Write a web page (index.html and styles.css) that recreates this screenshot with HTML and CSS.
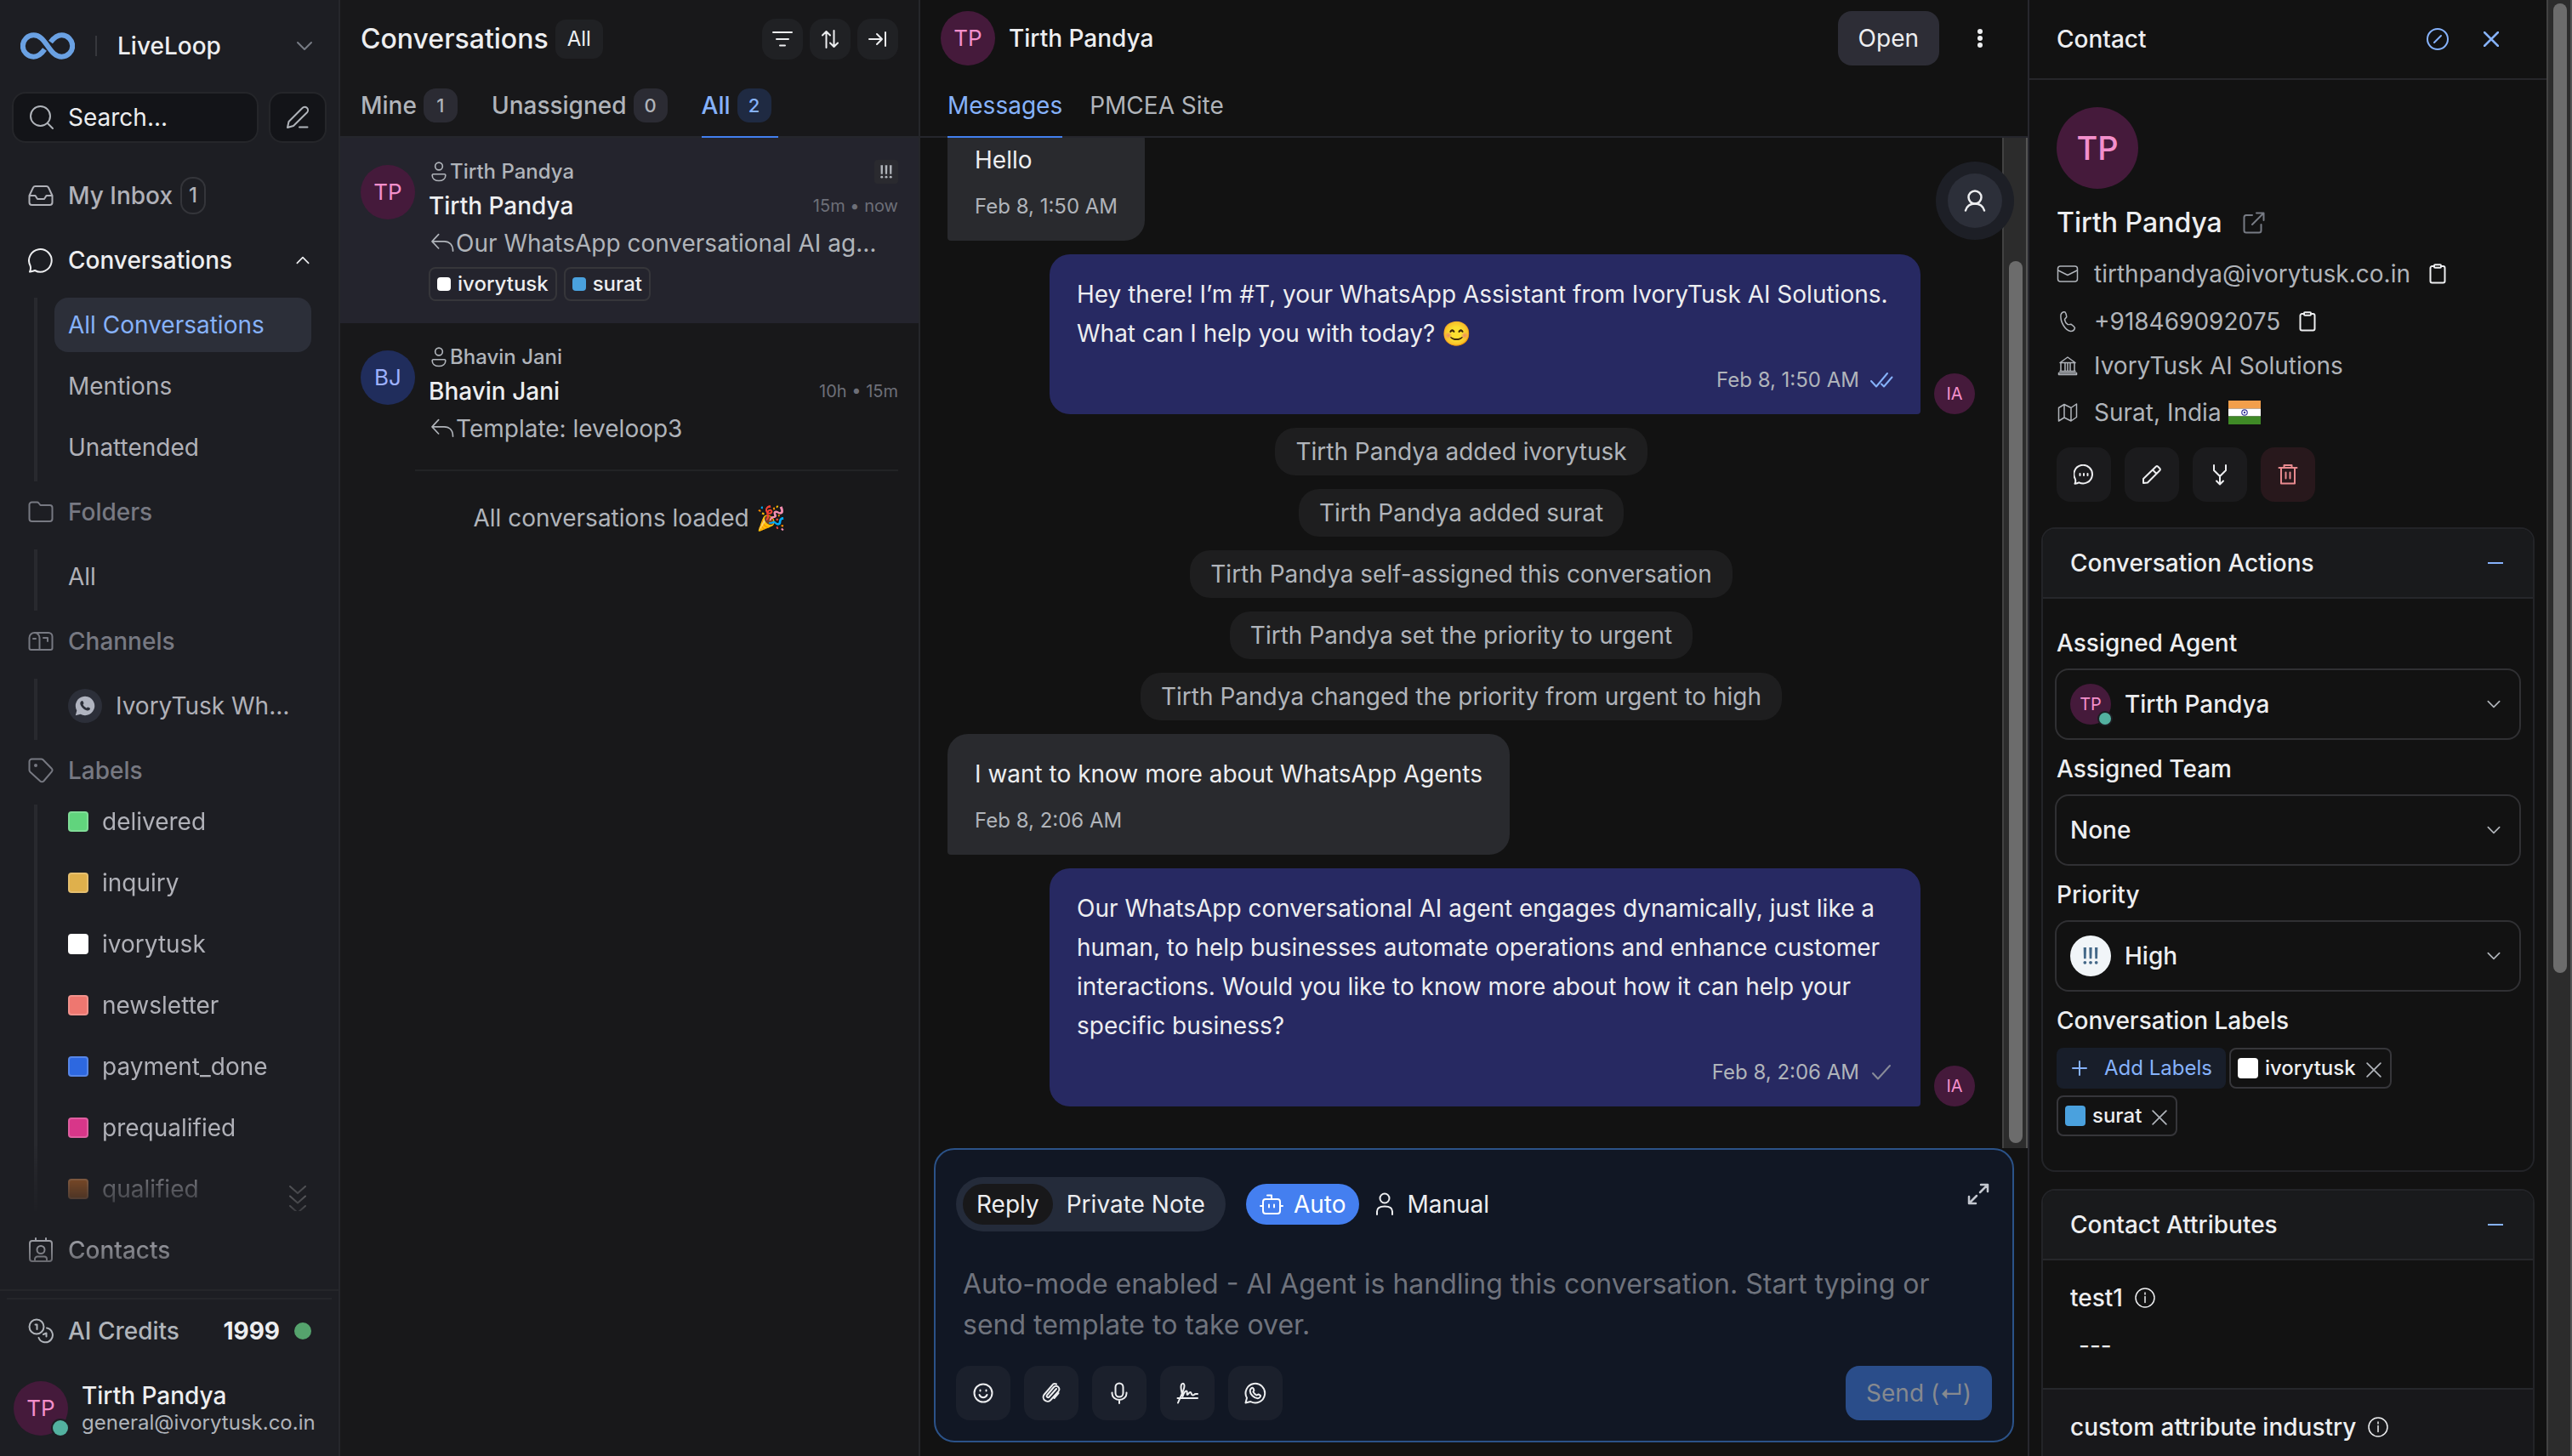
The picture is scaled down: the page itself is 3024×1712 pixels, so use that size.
FILE: index.html
```html
<!DOCTYPE html>
<html lang="en">
<head>
<meta charset="utf-8">
<title>Conversations - LiveLoop</title>
<link rel="stylesheet" href="styles.css">
</head>
<body>
<svg class="sprite" aria-hidden="true">
  <symbol id="chev-down" viewBox="0 0 24 24"><path d="M4 8l8 8 8-8"/></symbol>
  <symbol id="chev-up" viewBox="0 0 24 24"><path d="M4 16l8-8 8 8"/></symbol>
  <symbol id="person-dot" viewBox="0 0 16 24"><circle cx="8" cy="6" r="4"/><path d="M2 14.500h12a1.200 1.200 0 0 1 1.200 1.400c0 3.500-3 5.800-7.200 5.800s-7.200-2.300-7.200-5.800a1.200 1.200 0 0 1 1.200-1.400z"/></symbol>
  <symbol id="reply-arrow" viewBox="0 0 26 22"><path d="M9 1.500L2 9l7 7.500M2 9h13c6 0 9.500 4 9.500 10.500"/></symbol>
  <symbol id="clipboard" viewBox="0 0 20 24"><path d="M6 3H3.500A2 2 0 0 0 1.500 5v15.500a2 2 0 0 0 2 2h13a2 2 0 0 0 2-2V5a2 2 0 0 0-2-2H14"/><rect x="6" y="1.200" width="8" height="3.600" rx="1"/></symbol>
  <symbol id="info" viewBox="0 0 24 24"><circle cx="12" cy="12" r="11"/><path d="M12 10.500v7M12 6v2"/></symbol>
  <symbol id="close" viewBox="0 0 16 16"><path d="M1 1l14 14M15 1L1 15"/></symbol>
  <symbol id="bangs" viewBox="0 0 16 18"><path class="solid" d="M.5 0h3l-.3 12H.8zM6.500 0h3l-.3 12H6.800zM12.500 0h3l-.3 12h-2.400z"/><circle class="solid" cx="2" cy="16" r="1.700"/><circle class="solid" cx="8" cy="16" r="1.700"/><circle class="solid" cx="14" cy="16" r="1.700"/></symbol>
</svg>

<div class="app">
  <aside class="sidebar">
    <div class="brand">
      <svg class="logo" width="64" height="32" viewBox="0 0 64 32"><path d="M28.500 20C25 25 21.500 28.700 15.500 28.700a12.700 12.700 0 0 1 0-25.400C23 3.300 27 9 32 16s9 12.700 16.500 12.700a12.700 12.700 0 0 0 0-25.400c-6 0-9.500 3.700-13 8.200"/></svg>
      <span class="brand-rule"></span>
      <button class="brand-name">LiveLoop <svg class="icon dim" width="24" height="24"><use href="#chev-down"/></svg></button>
    </div>
    <div class="search-row">
      <label class="search">
        <svg class="icon" width="30" height="30" viewBox="0 0 30 30"><circle cx="13.500" cy="13.500" r="11.500"/><path d="M22 22l6 6"/></svg>
        <input type="text" placeholder="Search..." aria-label="Search">
      </label>
      <button class="compose" aria-label="New message"><svg class="icon" width="28" height="28" viewBox="0 0 28 28"><path d="M2 26l1.500-7L19.500 3a3.600 3.600 0 0 1 5.500 5.200L9 24zM16 25.500h9.500"/></svg></button>
    </div>

    <div class="nav-scroll">
    <nav class="nav">
      <a class="nav-head" href="#"><svg class="icon" width="30" height="26" viewBox="0 0 30 26"><path d="M1.500 13L6 3.500A3 3 0 0 1 8.500 2h13A3 3 0 0 1 24 3.500L28.500 13v8a3 3 0 0 1-3 3h-21a3 3 0 0 1-3-3zM1.500 13h7l2.500 4h8l2.500-4h7"/></svg>My Inbox <span class="count-ring">1</span></a>

      <button class="nav-head bright"><svg class="icon" width="30" height="30" viewBox="0 0 30 30"><path d="M2 28.500c1-2 1.500-4 .6-7A13.300 13.300 0 1 1 8 27c-2 1-4 1.200-6 1.500z"/></svg>Conversations <svg class="icon push" width="20" height="20"><use href="#chev-up"/></svg></button>
      <ul class="nav-list">
        <li><a class="current" href="#">All Conversations</a></li>
        <li><a href="#">Mentions</a></li>
        <li><a href="#">Unattended</a></li>
      </ul>

      <button class="nav-head faint"><svg class="icon" width="30" height="26" viewBox="0 0 30 26"><path d="M4.500 1.500h6c1 0 1.500.3 2 1l2 2.500h11a3 3 0 0 1 3 3v13a3 3 0 0 1-3 3h-21a3 3 0 0 1-3-3v-16.500a3 3 0 0 1 3-3z"/></svg>Folders</button>
      <ul class="nav-list"><li><a href="#">All</a></li></ul>

      <button class="nav-head faint"><svg class="icon" width="30" height="24" viewBox="0 0 30 24"><path d="M7.500 2H24a4.500 4.500 0 0 1 4.500 4.500V20a2 2 0 0 1-2 2h-23a2 2 0 0 1-2-2V8a6 6 0 0 1 12 0v14M10 2M6 9h3M18 8h5v4"/></svg>Channels</button>
      <ul class="nav-list"><li><a class="channel" href="#"><span class="channel-dot"><svg width="24" height="24" viewBox="0 0 24 24"><path class="blob" d="M.8 23.200L2.300 17.500A11.200 11.200 0 1 1 6.700 21.800z"/><path class="handset" d="M7.500 6.500c.8-.9 1.700-.7 2 .1l1 2.200c0 .6-.9 1.300-.9 1.800.8 1.700 2.200 3 4 3.800.6 0 1.200-1.200 1.800-1l2.300 1.200c.5.400.2 1.900-.8 2.500-1.400.9-3.600.5-6.600-1.600-2.700-2.200-4-4.700-4-6.400 0-1.100.6-2 1.200-2.600z"/></svg></span>IvoryTusk Wh…</a></li></ul>

      <button class="nav-head faint"><svg class="icon" width="30" height="30" viewBox="0 0 30 30"><path d="M1.500 4.500a3 3 0 0 1 3-3h11a3 3 0 0 1 2 .8l10.300 10.500a2.500 2.500 0 0 1 0 3.600L18.300 27.500a2.800 2.800 0 0 1-4 0L2.500 16.800a3 3 0 0 1-1-2.200z"/><circle class="solid" cx="9" cy="9" r="2"/></svg>Labels</button>
      <ul class="nav-list tags">
        <li><a href="#"><span class="swatch green"></span>delivered</a></li>
        <li><a href="#"><span class="swatch amber"></span>inquiry</a></li>
        <li><a href="#"><span class="swatch white"></span>ivorytusk</a></li>
        <li><a href="#"><span class="swatch coral"></span>newsletter</a></li>
        <li><a href="#"><span class="swatch blue"></span>payment_done</a></li>
        <li><a href="#"><span class="swatch pink"></span>prequalified</a></li>
        <li><a href="#"><span class="swatch brown"></span>qualified</a>
          <svg class="icon more" width="20" height="36" viewBox="0 0 20 36"><path opacity=".5" d="M1 2l9 8 9-8"/><path opacity=".75" d="M1 13.500l9 8 9-8"/><path d="M1 25l9 8 9-8"/></svg></li>
      </ul>

      <a class="nav-head contacts" href="#"><svg class="icon" width="30" height="30" viewBox="0 0 30 30"><rect x="2" y="4" width="26" height="24" rx="3"/><path d="M9 1v3M21 1v3M8 28v-2.500a3 3 0 0 1 3-3h8a3 3 0 0 1 3 3V28"/><circle cx="15" cy="14.500" r="4.500"/></svg>Contacts</a>
    </nav>
    </div>

    <div class="side-foot">
      <div class="credits">
        <svg class="icon" width="30" height="30" viewBox="0 0 30 30"><circle cx="10" cy="10" r="8.500"/><path d="M8.500 7.500h2V13M22 11.500A8.500 8.500 0 1 1 12.500 23M18 19l3.500-1.500v4"/></svg>
        <span>AI Credits</span><strong>1999</strong><i class="ok-dot"></i>
      </div>
      <button class="me">
        <span class="avatar plum">TP<i class="presence"></i></span>
        <span class="me-text"><b>Tirth Pandya</b><small>general@ivorytusk.co.in</small></span>
      </button>
    </div>
  </aside>

  <section class="list">
    <header class="list-head">
      <h1>Conversations</h1><span class="chip">All</span>
      <div class="tools">
        <button aria-label="Filter"><svg class="icon" width="24" height="24" viewBox="0 0 24 24"><path d="M1 4h22M5 12h14M9 19.500h6"/></svg></button>
        <button aria-label="Sort"><svg class="icon" width="24" height="24" viewBox="0 0 24 24"><path d="M7.500 22V3M3 7.500L7.500 3 12 7.500M16.500 2v19M12 16.500l4.500 4.500 4.500-4.500"/></svg></button>
        <button aria-label="Expand list"><svg class="icon" width="24" height="24" viewBox="0 0 24 24"><path d="M2 12h15M11 6l6 6-6 6M21 4v16"/></svg></button>
      </div>
    </header>
    <div class="tabs">
      <button class="tab">Mine <span class="badge">1</span></button>
      <button class="tab">Unassigned <span class="badge">0</span></button>
      <button class="tab on">All <span class="badge">2</span></button>
    </div>
    <article class="card active">
      <span class="avatar plum">TP</span>
      <div class="card-body">
        <div class="row inbox"><svg class="icon thin" width="20" height="26"><use href="#person-dot"/></svg>Tirth Pandya <span class="prio"><svg width="14" height="18"><use href="#bangs"/></svg></span></div>
        <div class="row who"><h2>Tirth Pandya</h2><time>15m • now</time></div>
        <p class="row preview"><svg class="icon thin" width="32" height="24"><use href="#reply-arrow"/></svg>Our WhatsApp conversational AI ag…</p>
        <div class="labels"><span class="label"><i class="sq white"></i>ivorytusk</span><span class="label"><i class="sq sky"></i>surat</span></div>
      </div>
    </article>
    <article class="card">
      <span class="avatar navy">BJ</span>
      <div class="card-body">
        <div class="row inbox"><svg class="icon thin" width="20" height="26"><use href="#person-dot"/></svg>Bhavin Jani</div>
        <div class="row who"><h2>Bhavin Jani</h2><time>10h • 15m</time></div>
        <p class="row preview"><svg class="icon thin" width="32" height="24"><use href="#reply-arrow"/></svg>Template: leveloop3</p>
      </div>
    </article>
    <p class="loaded">All conversations loaded 🎉</p>
  </section>

  <main class="chat">
    <header class="chat-head">
      <span class="avatar plum">TP</span><h2>Tirth Pandya</h2>
      <button class="open">Open</button>
      <button class="dots" aria-label="More"><svg width="8" height="24" viewBox="0 0 8 24"><circle cx="4" cy="4" r="3"/><circle cx="4" cy="12" r="3"/><circle cx="4" cy="20" r="3"/></svg></button>
    </header>
    <div class="tabs chat-tabs">
      <button class="tab on">Messages</button><button class="tab">PMCEA Site</button>
    </div>
    <div class="stream">
      <div class="messages">
        <div class="bubble in"><p>Hello</p><time>Feb 8, 1:50 AM</time></div>
        <div class="sent">
          <div class="bubble out"><p>Hey there! I’m #T, your WhatsApp Assistant from IvoryTusk AI Solutions.<br>What can I help you with today? 😊</p><time>Feb 8, 1:50 AM <svg class="icon read" width="28" height="20" viewBox="0 0 28 20"><path d="M2 11l6 6.500L21 2M14 14.500l3 3L26.500 6.500"/></svg></time></div>
          <span class="avatar plum small">IA</span>
        </div>
        <p class="event">Tirth Pandya added ivorytusk</p>
        <p class="event">Tirth Pandya added surat</p>
        <p class="event">Tirth Pandya self-assigned this conversation</p>
        <p class="event">Tirth Pandya set the priority to urgent</p>
        <p class="event">Tirth Pandya changed the priority from urgent to high</p>
        <div class="bubble in"><p>I want to know more about WhatsApp Agents</p><time>Feb 8, 2:06 AM</time></div>
        <div class="sent">
          <div class="bubble out"><p>Our WhatsApp conversational AI agent engages dynamically, just like a human, to help businesses automate operations and enhance customer interactions. Would you like to know more about how it can help your specific business?</p><time>Feb 8, 2:06 AM <svg class="icon sent-tick" width="28" height="20" viewBox="0 0 28 20"><path d="M4 11l6 6.500L24 2"/></svg></time></div>
          <span class="avatar plum small">IA</span>
        </div>
      </div>
      <div class="track"><i class="thumb"></i></div>
      <button class="peek" aria-label="Contact panel"><span><svg class="icon bold" width="28" height="28" viewBox="0 0 28 28"><circle cx="14" cy="10" r="7.500"/><path d="M3 25.500c1.500-5 5.500-8 11-8s9.500 3 11 8"/></svg></span></button>
    </div>

    <form class="composer">
      <div class="modes">
        <div class="segment"><button type="button" class="on">Reply</button><button type="button">Private Note</button></div>
        <button type="button" class="auto"><svg class="icon" width="28" height="28" viewBox="0 0 28 28"><rect x="4" y="8" width="20" height="17" rx="3"/><path d="M14 8V3.500h-5M1 16h3M24 16h3M11 14.500v3M17 14.500v3"/></svg>Auto</button>
        <button type="button" class="manual"><svg class="icon" width="24" height="28" viewBox="0 0 24 28"><circle cx="12" cy="7" r="5.500"/><path d="M3 26v-3.500c0-4 3-6 9-6s9 2 9 6V26"/></svg>Manual</button>
        <button type="button" class="expand" aria-label="Expand"><svg class="icon bold" width="26" height="26" viewBox="0 0 26 26"><path d="M16 2h8v8M24 2l-9 9M10 24H2v-8M2 24l9-9"/></svg></button>
      </div>
      <textarea rows="2" aria-label="Message" placeholder="Auto-mode enabled - AI Agent is handling this conversation. Start typing or send template to take over."></textarea>
      <div class="actions">
        <button type="button" aria-label="Emoji"><svg class="icon" width="24" height="24" viewBox="0 0 24 24"><circle cx="12" cy="12" r="10.500"/><path d="M7.500 14c1 2.300 2.600 3.200 4.500 3.200s3.500-.9 4.500-3.200M8.500 8.500v1M15.500 8.500v1"/></svg></button>
        <button type="button" aria-label="Attach"><svg class="icon" width="24" height="24" viewBox="0 0 24 24"><path d="M18 7l-8.500 9.500a1.600 1.600 0 0 1-2.500-2L15 5a3.600 3.600 0 0 1 5.500 4.800L11 20.500a5 5 0 0 1-7.500-6.500L13 3a4 4 0 0 1 5-1.500M20.500 12l-5 6"/></svg></button>
        <button type="button" aria-label="Record"><svg class="icon" width="24" height="26" viewBox="0 0 24 26"><rect x="7.500" y="1.500" width="9" height="16" rx="4.500"/><path d="M3.500 12.500v1a8.500 7.500 0 0 0 17 0v-1M12 21v4"/></svg></button>
        <button type="button" aria-label="Signature"><svg class="icon" width="26" height="26" viewBox="0 0 26 26"><path d="M2 24.500C5 17 9.500 9.500 9.500 4.500c0-4-4-3.500-4 1.500 0 4 1.500 8 2 11 1-3 3-6.500 4.500-6.500s0 4.500 1 4.500 2-3 3.500-3 1 3.500 3 3.500 1-1.500 3.500-1.500h2M1.500 19H25"/></svg></button>
        <button type="button" aria-label="WhatsApp template"><svg class="icon" width="26" height="26" viewBox="0 0 26 26"><path d="M1.500 24.500L3 18.700A11.300 11.300 0 1 1 7.300 23z"/><path d="M8 7.500c1.200-1.300 2.200-1 2.500 0l.9 2.200c0 .7-1 1.400-1 1.900 1 1.900 2.300 3.200 4.200 4 .6 0 1.400-1.300 2-1.100l2.400 1.300c.4 1.700-1.500 3.400-3.300 3.400-4.200 0-9-4.800-9-8.800 0-1.200.6-2.200 1.300-2.900z"/></svg></button>
        <button type="submit" class="send" disabled>Send (↵)</button>
      </div>
    </form>
  </main>

  <aside class="contact">
    <div class="contact-scroll">
      <header class="contact-head">
        <h2>Contact</h2>
        <button aria-label="Block"><svg class="icon" width="28" height="28" viewBox="0 0 28 28"><circle cx="14" cy="14" r="12"/><path d="M10 18l8-8"/></svg></button>
        <button aria-label="Close"><svg class="icon bold" width="18" height="18"><use href="#close"/></svg></button>
      </header>
      <div class="profile">
        <span class="avatar plum large">TP</span>
        <h3>Tirth Pandya <a href="#" aria-label="Open contact"><svg class="icon dim" width="26" height="26" viewBox="0 0 26 26"><path d="M11 4H4a2.500 2.500 0 0 0-2.500 2.500V22A2.500 2.500 0 0 0 4 24.500h15A2.500 2.500 0 0 0 21.500 22v-7M16 1.500h8.500V10M24 2L11 15"/></svg></a></h3>
        <div class="fact tall"><svg class="icon thin" width="26" height="24" viewBox="0 0 26 24"><rect x="1.500" y="3" width="23" height="18" rx="3"/><path d="M2 8l11 5.500L24 8"/></svg><a href="#">tirthpandya@ivorytusk.co.in</a><button aria-label="Copy email"><svg class="icon" width="20" height="24"><use href="#clipboard"/></svg></button></div>
        <div class="fact tall"><svg class="icon thin" width="26" height="26" viewBox="0 0 26 26"><path d="M5 5c1-2.500 3-3.500 5-3 1 1 1.500 3.500 1.800 5.500-.5 1.500-2.300 2-2.300 3.500.5 2.500 2 4.500 3.700 5.500 1.300.5 3-.5 4-.2 1.800 1.200 3.800 3 4.300 4.200-.5 2.500-2.500 4-5 4-6-1-12.500-10.500-11.500-19.500z"/></svg><a href="#">+918469092075</a><button aria-label="Copy phone"><svg class="icon" width="20" height="24"><use href="#clipboard"/></svg></button></div>
        <div class="fact"><svg class="icon thin" width="26" height="26" viewBox="0 0 26 26"><path d="M4 9.500L13 3l9 6.500zM5 10v9.500M10 10v9.500M13 10v9.500M16 10v9.500M21 10v9.500M4 19.500h18M2.500 23.500h21v-2h-21z"/></svg>IvoryTusk AI Solutions</div>
        <div class="fact place"><svg class="icon thin" width="26" height="24" viewBox="0 0 26 24"><path d="M2.500 6.500L9 2.500l8 4 6.500-4.500v15.500L17 22l-8-4-6.500 4zM9 2.500V18M17 6.500V22"/></svg>Surat, India <svg class="flag" width="38" height="28" viewBox="0 0 38 28"><path fill="#f29f4b" d="M0 0h38v9.500H0z"/><path fill="#fff" d="M0 9.500h38v9H0z"/><path fill="#3f8a26" d="M0 18.500h38V28H0z"/><circle cx="19" cy="14" r="3.200" fill="none" stroke="#3a3a9c" stroke-width="1.200"/><circle cx="19" cy="14" r="1.200" fill="#3a3a9c"/></svg></div>
        <div class="quick">
          <button aria-label="Message"><svg class="icon" width="24" height="24" viewBox="0 0 24 24"><path d="M1.500 22.800c.8-1.600 1.200-3.200.4-5.600A10.800 10.800 0 1 1 6.300 21.300c-1.600.8-3.200 1.200-4.800 1.500zM7.500 11v2M12 11v2M16.500 11v2"/></svg></button>
          <button aria-label="Edit"><svg class="icon" width="24" height="24" viewBox="0 0 24 24"><path d="M2 22v-5L17 2.500a1.500 1.500 0 0 1 2 0L21.500 5a1.500 1.500 0 0 1 0 2L7 21.500zM13 6.500l4.500 4.500"/></svg></button>
          <button aria-label="Merge"><svg class="icon" width="24" height="26" viewBox="0 0 24 26"><path d="M5 2v6l7 7 7-7V2M12 15v9M8 20.500l4 4 4-4"/></svg></button>
          <button class="danger" aria-label="Delete"><svg class="icon" width="24" height="26" viewBox="0 0 24 26"><path d="M1.500 5h21M7.500 5V2h9v3M4 5v18.500h16V5M9.500 10.500v7M14.500 10.500v7"/></svg></button>
        </div>
      </div>

      <section class="panel">
        <button class="panel-head">Conversation Actions <i class="minus"></i></button>
        <div class="panel-body">
          <label for="agent">Assigned Agent</label>
          <div class="select"><span class="avatar plum small">TP<i class="presence"></i></span><select id="agent"><option>Tirth Pandya</option></select><svg class="icon" width="20" height="20"><use href="#chev-down"/></svg></div>
          <label for="team">Assigned Team</label>
          <div class="select"><select id="team"><option>None</option></select><svg class="icon" width="20" height="20"><use href="#chev-down"/></svg></div>
          <label for="priority">Priority</label>
          <div class="select"><span class="avatar pale small"><svg width="18" height="20"><use href="#bangs"/></svg></span><select id="priority"><option>High</option></select><svg class="icon" width="20" height="20"><use href="#chev-down"/></svg></div>
          <h4>Conversation Labels</h4>
          <div class="picked">
            <button class="add"><svg class="icon" width="18" height="18" viewBox="0 0 18 18"><path d="M9 1v16M1 9h16"/></svg>Add Labels</button>
            <span class="pill"><i class="sq big white"></i>ivorytusk <button aria-label="Remove ivorytusk"><svg class="icon thin" width="18" height="18"><use href="#close"/></svg></button></span>
            <span class="pill"><i class="sq big sky"></i>surat <button aria-label="Remove surat"><svg class="icon thin" width="18" height="18"><use href="#close"/></svg></button></span>
          </div>
        </div>
      </section>

      <section class="panel">
        <button class="panel-head">Contact Attributes <i class="minus"></i></button>
        <div class="attr"><h4>test1 <svg class="icon thin" width="24" height="24"><use href="#info"/></svg></h4><p>---</p></div>
        <div class="attr alt"><h4>custom attribute industry <svg class="icon thin" width="24" height="24"><use href="#info"/></svg></h4></div>
      </section>
    </div>
    <div class="track"><i class="thumb top"></i></div>
  </aside>
</div>
</body>
</html>
```
FILE: styles.css
```css
* { box-sizing: border-box; margin: 0; padding: 0; }

body {
  background: #121212;
  color: #edeef0;
  font: 400 28px/40px Inter, "Noto Sans", sans-serif;
  overflow: hidden;
}

button, input, textarea, select {
  font: inherit;
  color: inherit;
  background: none;
  border: 0;
  outline: 0;
  appearance: none;
}
button { cursor: pointer; }
a { color: inherit; text-decoration: none; }
ul { list-style: none; }
h1, h2, h3, h4, b { font-weight: 500; font-size: 28px; }

.sprite { position: absolute; width: 0; height: 0; }
.icon {
  flex: none;
  fill: none;
  stroke: currentColor;
  stroke-width: 2;
  stroke-linecap: round;
  stroke-linejoin: round;
}
.icon.thin { stroke-width: 1.5; }
.icon.bold { stroke-width: 2.500; }
.icon.dim { color: #777b84; }
.solid { fill: currentColor; stroke: none; }

.app {
  display: grid;
  grid-template-columns: 400px 682px minmax(0, 1fr) 638px;
  height: 100vh;
}

/* avatars */
.avatar {
  position: relative;
  flex: none;
  display: flex;
  align-items: center;
  justify-content: center;
  width: 64px;
  height: 64px;
  border-radius: 50%;
  font-size: 26px;
}
.avatar.small { width: 48px; height: 48px; font-size: 20px; }
.avatar.large { width: 96px; height: 96px; font-size: 38px; font-weight: 500; }
.plum { background: #451a3b; color: #f38fcb; }
.navy { background: #202d5c; color: #9eb1ff; }
.pale { background: #f1f5f8; color: #446888; }
.presence {
  position: absolute;
  right: 0;
  bottom: 0;
  width: 18px;
  height: 18px;
  border-radius: 50%;
  background: #53b1a0;
  box-shadow: 0 0 0 2px #1d1e23;
}
.small .presence { width: 14px; height: 14px; }

/* sidebar */
.sidebar {
  display: flex;
  flex-direction: column;
  min-height: 0;
  background: #1d1e23;
  border-right: 2px solid #26272c;
}
.brand {
  display: flex;
  align-items: center;
  height: 108px;
  padding: 0 28px 0 24px;
}
.logo { fill: none; stroke: #6aa1e3; stroke-width: 6; }
.brand-rule { width: 2px; height: 24px; margin: 0 24px; background: #36373c; }
.brand-name {
  flex: 1;
  display: flex;
  align-items: center;
  justify-content: space-between;
  font-weight: 500;
}
.search-row { display: flex; gap: 12px; padding: 0 14px; }
.search, .compose {
  display: flex;
  align-items: center;
  height: 60px;
  background: #131418;
  border: 2px solid #25262a;
  border-radius: 16px;
  color: #b0b4ba;
}
.search { flex: 1; gap: 16px; padding: 0 16px 0 18px; }
.search input { min-width: 0; width: 100%; color: #edeef0; }
.search input::placeholder { color: #edeef0; opacity: 1; }
.compose { justify-content: center; width: 68px; }

.nav-scroll {
  flex: 1;
  min-height: 0;
  overflow: hidden;
  border-bottom: 2px solid #25262a;
}
.nav { display: flex; flex-direction: column; padding: 30px 32px 0 33px; color: #b0b1b8; }
.nav-head {
  display: flex;
  align-items: center;
  gap: 17px;
  height: 64px;
  margin-bottom: 12px;
  font-weight: 500;
}
.nav-head.bright { color: #edeef0; }
.nav-head.faint { color: #777982; }
.push { margin-left: auto; }
.count-ring {
  margin-left: -8px;
  padding: 0 8px;
  border: 2px solid #34353a;
  border-radius: 14px;
  font-size: 24px;
}
.nav-list {
  margin: 0 0 4px 7px;
  padding-left: 20px;
  border-left: 4px solid #28292e;
}
.nav-list li { height: 72px; }
.nav-list a {
  display: flex;
  align-items: center;
  height: 64px;
  padding: 0 16px;
  border-radius: 16px;
}
.nav-list a.current { background: #2c2f39; color: #86b2fb; }
.nav-list a.channel { gap: 16px; padding: 0 0 0 16px; }
.channel-dot {
  display: flex;
  align-items: center;
  justify-content: center;
  width: 40px;
  height: 40px;
  border-radius: 50%;
  background: #2c2f39;
}
.blob { fill: #b0b4c0; }
.handset { fill: #2c2f39; }
.tags {
  height: 478px;
  margin-top: -4px;
  mask-image: linear-gradient(#000 400px, transparent 490px);
}
.tags li { display: flex; align-items: center; justify-content: space-between; height: 40px; margin-bottom: 32px; }
.tags a { gap: 16px; padding: 0 16px; }
.more { margin: 26px 6px 0 0; color: #fff; }
.swatch {
  width: 24px;
  height: 24px;
  border: 2px solid rgba(255, 255, 255, .2);
  border-radius: 4px;
}
.green { background: #61d47d; }
.amber { background: #dfb04c; }
.white { background: #fff; }
.coral { background: #ee7770; }
.blue { background: #2d68e0; }
.pink { background: #d83689; }
.brown { background: #c06a2a; }
.sky { background: #4aa1de; }
.contacts {
  margin: 10px 0 0;
  mask-image: linear-gradient(#000 10px, transparent 84px);
}

.side-foot { padding: 8px 8px 12px; }
.credits {
  display: flex;
  align-items: center;
  gap: 17px;
  height: 76px;
  padding: 0 24px 0 25px;
  border-top: 2px solid #25262a;
  color: #b0b4ba;
  font-weight: 500;
}
.credits strong { margin-left: auto; color: #edeef0; font-weight: 700; }
.ok-dot { width: 20px; height: 20px; border-radius: 50%; background: #55a36d; }
.me { display: flex; align-items: center; gap: 16px; width: 100%; height: 88px; margin-top: 10px; padding: 0 8px; text-align: left; }
.me-text b { display: block; line-height: 34px; }
.me-text small { display: block; color: #b0b4ba; font-size: 24px; line-height: 30px; }

/* conversation list */
.list { background: #18181a; border-right: 2px solid #25262a; }
.list-head { display: flex; align-items: center; gap: 8px; height: 92px; padding: 0 24px; }
.list-head h1 { font-size: 32px; }
.chip { padding: 3px 14px; border-radius: 12px; background: #202124; font-size: 24px; }
.tools { display: flex; gap: 8px; margin-left: auto; }
.tools button {
  display: flex;
  align-items: center;
  justify-content: center;
  width: 48px;
  height: 48px;
  border-radius: 16px;
  background: #202124;
}
.tabs { display: flex; gap: 32px; height: 70px; padding: 0 24px; border-bottom: 2px solid #25262c; }
.tab {
  display: flex;
  align-items: center;
  gap: 8px;
  height: 70px;
  padding: 0 8px 4px 0;
  border-bottom: 2px solid transparent;
  color: #b0b4ba;
  font-weight: 500;
}
.tab.on { border-color: #427fef; color: #86b2fb; }
.badge {
  width: 40px;
  border-radius: 14px;
  background: #2b2b33;
  font-size: 22px;
  text-align: center;
}
.on .badge { background: #1f2a42; }

.card { display: flex; gap: 16px; padding-left: 24px; }
.card .avatar { margin-top: 32px; }
.card.active { background: #24242d; }
.card-body { flex: 1; min-width: 0; margin-right: 24px; padding: 20px 0 26px; }
.card:not(.active) { background: linear-gradient(#222325, #222325) right 24px bottom / 568px 2px no-repeat; }
.row { display: flex; align-items: center; height: 40px; }
.row.inbox { gap: 3px; color: #b0b4ba; font-size: 24px; font-weight: 500; }
.row.inbox .icon { margin-left: 2px; }
.prio {
  display: flex;
  align-items: center;
  justify-content: center;
  width: 28px;
  height: 28px;
  margin-left: auto;
  border-radius: 4px;
  background: #2a2a2f;
}
.who { justify-content: space-between; }
.who time { color: #6d6f78; font-size: 20px; }
.preview { height: 48px; color: #b0b4ba; white-space: nowrap; }
.labels { display: flex; gap: 8px; margin-top: 4px; }
.label {
  display: flex;
  align-items: center;
  gap: 8px;
  height: 40px;
  padding: 0 8px;
  border: 2px solid #36363a;
  border-radius: 8px;
  font-size: 24px;
  font-weight: 500;
}
.sq { width: 16px; height: 16px; border-radius: 4px; }
.sq.big { width: 24px; height: 24px; }
.loaded { padding: 35px 0; color: #b0b4ba; text-align: center; }

/* chat */
.chat { display: flex; flex-direction: column; min-width: 0; min-height: 0; border-right: 2px solid #27272e; }
.chat-head { display: flex; align-items: center; gap: 16px; height: 90px; flex: none; padding: 0 24px; }
.open {
  height: 64px;
  margin-left: auto;
  padding: 0 24px;
  border-radius: 16px;
  background: #2d2d36;
}
.dots { display: flex; justify-content: center; width: 64px; fill: currentColor; }
.chat-tabs { flex: none; height: 72px; padding: 0 32px; }
.chat-tabs .tab { height: 72px; padding: 0 0 2px; font-weight: 400; }
.stream { position: relative; flex: 1; min-height: 0; display: flex; }
.messages {
  flex: 1;
  min-width: 0;
  display: flex;
  flex-direction: column;
  justify-content: flex-end;
  align-items: flex-start;
  gap: 16px;
  padding: 0 32px 49px;
  overflow: hidden;
}
.bubble { flex: none; padding: 24px 32px; border-radius: 24px; line-height: 46px; }
.bubble.in { background: #292a2e; border-bottom-left-radius: 4px; }
.bubble.out { flex: 0 1 1024px; background: #272962; border-bottom-right-radius: 4px; }
.bubble time {
  display: flex;
  align-items: center;
  gap: 12px;
  margin-top: 16px;
  color: #b0b4ba;
  font-size: 24px;
  line-height: 32px;
}
.out time { justify-content: flex-end; }
.read { color: #86b2fb; }
.sent-tick { color: #888b99; }
.sent { flex: none; display: flex; align-items: flex-end; justify-content: flex-end; gap: 16px; width: 100%; }
.event {
  flex: none;
  align-self: center;
  padding: 8px 24px;
  border-radius: 24px;
  background: #1e1e1f;
  color: #b0b4ba;
}
.track {
  flex: none;
  width: 30px;
  padding: 4px 4px 6px 6px;
  background: #2c2c2c;
  border-left: 2px solid #424242;
  border-right: 2px solid #545454;
}
.thumb { display: block; width: 16px; height: 100%; border-radius: 8px; background: #6c6c6c; }
.stream .thumb { height: 88%; margin-top: 141px; }
.peek {
  position: absolute;
  top: 28px;
  right: 16px;
  padding: 14px;
  border-radius: 50%;
  background: #1d1f26;
}
.peek span {
  display: flex;
  align-items: center;
  justify-content: center;
  width: 64px;
  height: 64px;
  border-radius: 50%;
  background: #2c2f39;
}

.composer {
  flex: none;
  margin: 0 16px 16px;
  padding: 32px 24px 24px;
  border: 2px solid #2b5288;
  border-radius: 24px;
  background: #111724;
}
.modes { display: flex; align-items: center; }
.segment { display: flex; padding: 8px; margin-right: 24px; border-radius: 32px; background: #242b3a; }
.modes button { display: flex; align-items: center; height: 48px; padding: 0 16px; border-radius: 24px; }
.segment .on { background: #18181a; }
.modes .auto { gap: 12px; background: #447ff0; color: #fff; }
.modes .manual { gap: 14px; padding: 0 18px; }
.modes .expand { height: 26px; margin: -24px 0 0 auto; padding: 0 3px; color: #c3c7cf; }
textarea {
  display: block;
  width: 100%;
  height: 96px;
  margin: 38px 0 24px;
  padding: 0 8px;
  font-size: 32px;
  line-height: 48px;
  resize: none;
  overflow: hidden;
}
textarea::placeholder { color: #6f737d; opacity: 1; }
.actions { display: flex; gap: 16px; }
.actions button, .quick button {
  display: flex;
  align-items: center;
  justify-content: center;
  width: 64px;
  height: 64px;
  border-radius: 16px;
  background: #1b202c;
}
.actions .send { width: auto; margin-left: auto; padding: 0 24px; background: #2a4d8a; color: #86898f; }

/* contact panel */
.contact { display: flex; min-height: 0; }
.contact-scroll { flex: 1; min-width: 0; overflow: hidden; }
.contact-head {
  display: flex;
  align-items: center;
  gap: 40px;
  height: 94px;
  padding: 0 56px 0 32px;
  border-bottom: 2px solid #26262a;
}
.contact-head h2 { margin-right: auto; }
.contact-head button { display: flex; color: #86b2fb; }
.profile { padding: 32px 32px 30px; }
.profile h3 { display: flex; align-items: center; gap: 24px; margin: 20px 0 16px; font-size: 32px; }
.profile h3 a { display: flex; }
.fact { display: flex; align-items: center; gap: 18px; height: 40px; margin-bottom: 8px; color: #b0b4ba; }
.fact.tall { height: 48px; }
.fact.place { height: 54px; margin-bottom: 14px; }
.fact button { display: flex; margin-left: 4px; color: #edeef0; }
.flag { margin-left: -10px; }
.quick { display: flex; gap: 16px; }
.quick button { background: #1b1b1d; }
.quick .danger { background: #28181c; color: #e88a8f; }

.panel { margin: 0 14px 20px; border: 2px solid #232428; border-radius: 16px; overflow: hidden; }
.panel-head {
  display: flex;
  align-items: center;
  justify-content: space-between;
  width: 100%;
  height: 82px;
  padding: 0 35px 0 32px;
  background: #191a1c;
  border-bottom: 2px solid #26272b;
  font-weight: 500;
}
.minus { width: 18px; height: 2px; background: #86b2fb; }
.panel-body { padding: 32px 14px 40px; }
.panel-body label, .panel-body h4 { display: block; padding-left: 2px; font-weight: 500; }
.select {
  display: flex;
  align-items: center;
  gap: 16px;
  height: 84px;
  margin: 10px 0 14px;
  padding: 0 20px 0 16px;
  border: 2px solid #303033;
  border-radius: 16px;
}
.select select { flex: 1; min-width: 0; height: 80px; font-weight: 500; }
.select > .icon { color: #b0b4ba; }
.picked { display: flex; flex-wrap: wrap; gap: 8px 4px; margin: 12px 100px 0 2px; }
.picked .add, .pill {
  display: flex;
  align-items: center;
  height: 48px;
  border-radius: 8px;
  font-size: 24px;
  font-weight: 500;
}
.picked .add { gap: 20px; padding: 0 16px 0 18px; background: #181e2a; color: #86b2fb; font-weight: 400; }
.pill { gap: 8px; padding: 0 10px 0 8px; border: 2px solid #36363a; }
.pill button { display: flex; margin: 4px 0 0 4px; color: #b0b4ba; }
.attr { height: 152px; padding: 24px 32px; border-bottom: 2px solid #26272b; }
.attr.alt { background: #18181b; }
.attr h4 { display: flex; align-items: center; gap: 14px; }
.attr p { margin: 16px 0 0 10px; }
.contact .thumb.top { height: 67%; }
```
